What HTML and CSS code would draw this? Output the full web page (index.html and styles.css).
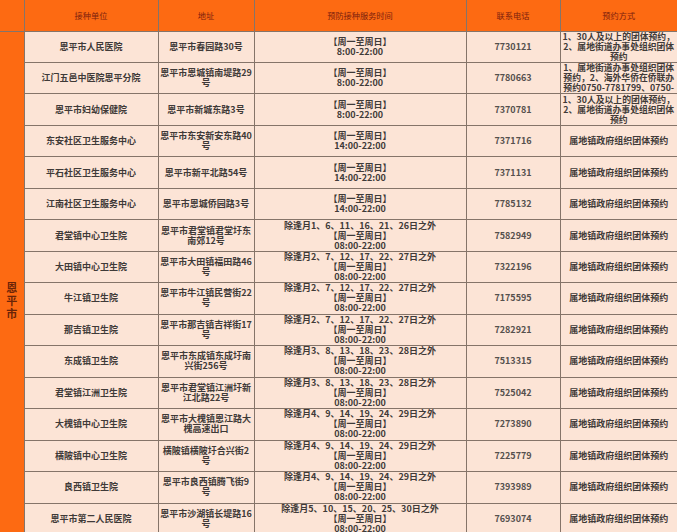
FILE: index.html
```html
<!DOCTYPE html>
<html lang="zh-CN">
<head>
<meta charset="utf-8">
<title>恩平市接种单位</title>
<link rel="stylesheet" href="styles.css">
</head>
<body>
<table class="sheet">
  <colgroup>
    <col class="c0"><col class="c1"><col class="c2"><col class="c3"><col class="c4"><col class="c5">
  </colgroup>
  <thead>
    <tr class="head">
      <th class="corner"></th>
      <th>接种单位</th>
      <th>地址</th>
      <th>预防接种服务时间</th>
      <th>联系电话</th>
      <th class="last">预约方式</th>
    </tr>
  </thead>
  <tbody>
    <tr class="row">
      <td class="region" rowspan="16"><div class="region-text">恩平市</div></td>
      <td>恩平市人民医院</td>
      <td>恩平市春园路30号</td>
      <td>【周一至周日】<br>8:00-22:00</td>
      <td class="tel">7730121</td>
      <td class="last way">1、30人及以上的团体预约，<br>2、属地街道办事处组织团体<br>预约</td>
    </tr>
    <tr class="row">
      <td>江门五邑中医院恩平分院</td>
      <td>恩平市恩城镇南堤路29<br>号</td>
      <td>【周一至周日】<br>8:00-22:00</td>
      <td class="tel">7780663</td>
      <td class="last way">1、属地街道办事处组织团体<br>预约，2、海外华侨在侨联办<br>预约0750-7781799、0750-</td>
    </tr>
    <tr class="row">
      <td>恩平市妇幼保健院</td>
      <td>恩平市新城东路3号</td>
      <td>【周一至周日】<br>8:00-22:00</td>
      <td class="tel">7370781</td>
      <td class="last way">1、30人及以上的团体预约，<br>2、属地街道办事处组织团体<br>预约</td>
    </tr>
    <tr class="row">
      <td>东安社区卫生服务中心</td>
      <td>恩平市东安新安东路40<br>号</td>
      <td>【周一至周日】<br>14:00-22:00</td>
      <td class="tel">7371716</td>
      <td class="last">属地镇政府组织团体预约</td>
    </tr>
    <tr class="row">
      <td>平石社区卫生服务中心</td>
      <td>恩平市新平北路54号</td>
      <td>【周一至周日】<br>14:00-22:00</td>
      <td class="tel">7371131</td>
      <td class="last">属地镇政府组织团体预约</td>
    </tr>
    <tr class="row">
      <td>江南社区卫生服务中心</td>
      <td>恩平市恩城侨园路3号</td>
      <td>【周一至周日】<br>14:00-22:00</td>
      <td class="tel">7785132</td>
      <td class="last">属地镇政府组织团体预约</td>
    </tr>
    <tr class="row">
      <td>君堂镇中心卫生院</td>
      <td>恩平市君堂镇君堂圩东<br>南郊12号</td>
      <td>除逢月1、6、11、16、21、26日之外<br>【周一至周日】<br>08:00-22:00</td>
      <td class="tel">7582949</td>
      <td class="last">属地镇政府组织团体预约</td>
    </tr>
    <tr class="row">
      <td>大田镇中心卫生院</td>
      <td>恩平市大田镇福田路46<br>号</td>
      <td>除逢月2、7、12、17、22、27日之外<br>【周一至周日】<br>08:00-22:00</td>
      <td class="tel">7322196</td>
      <td class="last">属地镇政府组织团体预约</td>
    </tr>
    <tr class="row">
      <td>牛江镇卫生院</td>
      <td>恩平市牛江镇民营街22<br>号</td>
      <td>除逢月2、7、12、17、22、27日之外<br>【周一至周日】<br>08:00-22:00</td>
      <td class="tel">7175595</td>
      <td class="last">属地镇政府组织团体预约</td>
    </tr>
    <tr class="row">
      <td>那吉镇卫生院</td>
      <td>恩平市那吉镇吉祥街17<br>号</td>
      <td>除逢月2、7、12、17、22、27日之外<br>【周一至周日】<br>08:00-22:00</td>
      <td class="tel">7282921</td>
      <td class="last">属地镇政府组织团体预约</td>
    </tr>
    <tr class="row">
      <td>东成镇卫生院</td>
      <td>恩平市东成镇东成圩南<br>兴街256号</td>
      <td>除逢月3、8、13、18、23、28日之外<br>【周一至周日】<br>08:00-22:00</td>
      <td class="tel">7513315</td>
      <td class="last">属地镇政府组织团体预约</td>
    </tr>
    <tr class="row">
      <td>君堂镇江洲卫生院</td>
      <td>恩平市君堂镇江洲圩新<br>江北路22号</td>
      <td>除逢月3、8、13、18、23、28日之外<br>【周一至周日】<br>08:00-22:00</td>
      <td class="tel">7525042</td>
      <td class="last">属地镇政府组织团体预约</td>
    </tr>
    <tr class="row">
      <td>大槐镇中心卫生院</td>
      <td>恩平市大槐镇恩江路大<br>槐高速出口</td>
      <td>除逢月4、9、14、19、24、29日之外<br>【周一至周日】<br>08:00-22:00</td>
      <td class="tel">7273890</td>
      <td class="last">属地镇政府组织团体预约</td>
    </tr>
    <tr class="row">
      <td>横陂镇中心卫生院</td>
      <td>横陂镇横陂圩合兴街2<br>号</td>
      <td>除逢月4、9、14、19、24、29日之外<br>【周一至周日】<br>08:00-22:00</td>
      <td class="tel">7225779</td>
      <td class="last">属地镇政府组织团体预约</td>
    </tr>
    <tr class="row">
      <td>良西镇卫生院</td>
      <td>恩平市良西镇腾飞街9<br>号</td>
      <td>除逢月4、9、14、19、24、29日之外<br>【周一至周日】<br>08:00-22:00</td>
      <td class="tel">7393989</td>
      <td class="last">属地镇政府组织团体预约</td>
    </tr>
    <tr class="row">
      <td>恩平市第二人民医院</td>
      <td>恩平市沙湖镇长堤路16<br>号</td>
      <td>除逢月5、10、15、20、25、30日之外<br>【周一至周日】<br>08:00-22:00</td>
      <td class="tel">7693074</td>
      <td class="last">属地镇政府组织团体预约</td>
    </tr>
  </tbody>
</table>
</body>
</html>
```

FILE: styles.css
```css
html, body {
  margin: 0;
  padding: 0;
  background: #fce4d6;
}

.sheet {
  border-collapse: collapse;
  table-layout: fixed;
  width: 677px;
  font-family: "Noto Sans CJK SC", "DejaVu Sans", sans-serif;
}

.c0 { width: 24px; }
.c1 { width: 134px; }
.c2 { width: 96px; }
.c3 { width: 212px; }
.c4 { width: 94px; }
.c5 { width: 117px; }

.sheet th,
.sheet td {
  border: 1px solid #857469;
  padding: 0 1px;
  text-align: center;
  vertical-align: middle;
  overflow: hidden;
  white-space: nowrap;
}

.head {
  height: 31px;
}

.head th {
  border-top: none;
  background: #fd6a12;
  color: #7c1e0e;
  font-size: 8.2px;
  font-weight: 400;
  line-height: 10px;
}

.head th.corner {
  border-left: none;
}

.row {
  height: 31.47px;
}

.row td {
  background: #fce4d6;
  color: #3f3a38;
  font-size: 9px;
  font-weight: 700;
  line-height: 10px;
}

.row td.tel {
  color: #55504d;
}

.row td.way {
  padding: 0;
  font-size: 8.8px;
}

.sheet .last {
  border-right: none;
}

.sheet td.region {
  border-left: none;
  background: #fd6a12;
  vertical-align: top;
  padding: 249px 0 0 0;
}

.region-text {
  width: 12px;
  margin: 0 auto;
  white-space: normal;
  font-size: 11px;
  line-height: 13px;
  font-weight: 700;
  color: #6a2408;
}
```
